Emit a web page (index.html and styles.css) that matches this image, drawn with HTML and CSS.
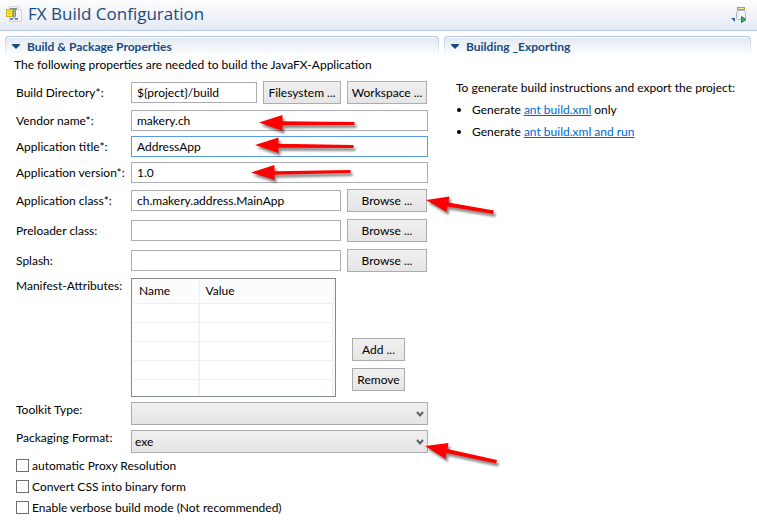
FILE: index.html
```html
<!DOCTYPE html>
<html lang="en">
<head>
<meta charset="utf-8">
<title>FX Build Configuration</title>
<link rel="stylesheet" href="styles.css">
</head>
<body>
<header class="form-header">
  <svg class="title-icon" width="16" height="16" viewBox="0 0 16 16" aria-hidden="true">
    <path d="M3.500.5h8.500l3.500 3.500v11.500h-12z" fill="#f3f4f6" stroke="#cfd2d8"/>
    <path d="M12.500.5v3h3" fill="#fff" stroke="#cfd2d8"/>
    <rect x="4" y="2" width="7" height="2" fill="#8a8f86"/>
    <rect x="7" y="4" width="3" height="7" fill="#808a86"/>
    <rect x="8" y="4" width="1" height="7" fill="#b8c0c0"/>
    <path d="M4 12h3v2H4zM9 12h3v2H9z" fill="#5b8fd6"/>
    <rect x="7" y="11" width="2" height="2" fill="#a9bdd8"/>
    <rect x=".5" y="3.500" width="6" height="7" fill="#f6e836" stroke="#c9b41f"/>
    <path d="M2 5.500h3M2 7.500h3" stroke="#d6c634"/>
  </svg>
  <h1 class="title">FX Build Configuration</h1>
  <button class="tool" type="button" aria-label="Run build">
    <svg width="16" height="16" viewBox="0 0 16 16" aria-hidden="true">
      <path d="M6.500 3.500h7l1 2v6l-1 1h-7l-1-1v-6z" fill="#f5f8fb" stroke="#a9b8cd"/>
      <path d="M7 5v6" stroke="#d4e0ea"/>
      <rect x="6.500" y=".5" width="7" height="2" fill="#f9e7a0" stroke="#c59a2b"/>
      <path d="M0 11h4v4z" fill="#2b659f"/>
      <path d="M10.500 9.500l4.500 3-4.500 3z" fill="#40ab62" stroke="#16853d"/>
    </svg>
  </button>
</header>

<main class="columns">
  <section class="section">
    <h2 class="section-title"><svg width="8" height="5" viewBox="0 0 8 5" aria-hidden="true"><path d="M0 0h8v1L4 5 0 1z"/></svg>Build &amp; Package Properties</h2>
    <p class="intro">The following properties are needed to build the JavaFX-Application</p>
    <form class="form">
      <div class="row tall">
        <label for="dir">Build Directory*:</label>
        <div class="field"><input class="text" id="dir" type="text" value="${project}/build"><button class="button medium" type="button">Filesystem ...</button><button class="button wide" type="button">Workspace ...</button></div>
      </div>
      <div class="row">
        <label for="vendor">Vendor name*:</label>
        <input class="text" id="vendor" type="text" value="makery.ch">
      </div>
      <div class="row">
        <label for="title">Application title*:</label>
        <input class="text active" id="title" type="text" value="AddressApp">
      </div>
      <div class="row">
        <label for="version">Application version*:</label>
        <input class="text" id="version" type="text" value="1.0">
      </div>
      <div class="row tall">
        <label for="class">Application class*:</label>
        <div class="field"><input class="text" id="class" type="text" value="ch.makery.address.MainApp"><button class="button wide" type="button">Browse ...</button></div>
      </div>
      <div class="row tall">
        <label for="preloader">Preloader class:</label>
        <div class="field"><input class="text" id="preloader" type="text"><button class="button wide" type="button">Browse ...</button></div>
      </div>
      <div class="row tall">
        <label for="splash">Splash:</label>
        <div class="field"><input class="text" id="splash" type="text"><button class="button wide" type="button">Browse ...</button></div>
      </div>
      <div class="row manifest">
        <span id="manifest-label">Manifest-Attributes:</span>
        <div class="manifest-field">
          <div class="table-frame">
            <table class="table" aria-labelledby="manifest-label">
              <thead><tr><th class="name-column">Name</th><th>Value</th></tr></thead>
              <tbody>
                <tr><td></td><td></td></tr>
                <tr><td></td><td></td></tr>
                <tr><td></td><td></td></tr>
                <tr><td></td><td></td></tr>
                <tr><td></td><td></td></tr>
              </tbody>
            </table>
          </div>
          <div class="table-actions">
            <button class="button" type="button">Add ...</button>
            <button class="button" type="button">Remove</button>
          </div>
        </div>
      </div>
      <div class="row choice">
        <label for="toolkit">Toolkit Type:</label>
        <div class="select-box">
          <select id="toolkit"><option></option></select>
          <svg class="chevron" width="8" height="7" viewBox="0 0 8 7" aria-hidden="true"><path d="M1 1l3 3.500L7 1"/></svg>
        </div>
      </div>
      <div class="row choice">
        <label for="format">Packaging Format:</label>
        <div class="select-box">
          <select id="format"><option>exe</option></select>
          <svg class="chevron" width="8" height="7" viewBox="0 0 8 7" aria-hidden="true"><path d="M1 1l3 3.500L7 1"/></svg>
        </div>
      </div>
      <div class="checks">
        <label class="check"><input type="checkbox">automatic Proxy Resolution</label>
        <label class="check"><input type="checkbox">Convert CSS into binary form</label>
        <label class="check"><input type="checkbox">Enable verbose build mode (Not recommended)</label>
      </div>
    </form>
  </section>

  <section class="section">
    <h2 class="section-title"><svg width="8" height="5" viewBox="0 0 8 5" aria-hidden="true"><path d="M0 0h8v1L4 5 0 1z"/></svg>Building _Exporting</h2>
    <div class="export">
      <p>To generate build instructions and export the project:</p>
      <ul>
        <li>Generate <a href="#">ant build.xml</a> only</li>
        <li>Generate <a href="#">ant build.xml and run</a></li>
      </ul>
    </div>
  </section>
</main>

<svg class="arrows" width="510" height="480" viewBox="0 0 510 480" aria-hidden="true">
  <path d="M259 122.500L282.500 115v6.200L354.500 122v3L282.500 125.200V131z"/>
  <path d="M255 145L278.500 137.500v6.200L353.500 145v3L278.500 147.800V153z"/>
  <path d="M251 172.500L274.500 165v6.200L350.500 170v3L274.500 174.800V180z"/>
  <path d="M426 200L449.500 196.500 448.500 202.500 494 210.500 493 214 447.500 206.500 446.500 212z"/>
  <path d="M425 446L448.500 443 447.500 449 497 460 496 463.500 446.500 453 445.500 459z"/>
</svg>
</body>
</html>
```

FILE: styles.css
```css
* { box-sizing: border-box; }

body {
  position: relative;
  margin: 0;
  background: #fff;
  color: #000;
  font: 12px/16px Lato, "Open Sans", sans-serif;
}

h1, h2, p, ul { margin: 0; padding: 0; }

button, input, select { font: inherit; color: inherit; }

.form-header {
  display: flex;
  align-items: center;
  gap: 6px;
  height: 31px;
  padding: 0 10px 2px 6px;
  border-bottom: 1px solid #b5c9e2;
  background: linear-gradient(#fdfdfe, #e5eaf3);
}

.title {
  flex: 1;
  color: #1a4b7f;
  font: 400 17px/24px "Open Sans", sans-serif;
}

.tool {
  width: 16px;
  height: 16px;
  margin-top: 2px;
  padding: 0;
  border: 0;
  background: none;
}

.tool svg, .title-icon { display: block; }

.columns {
  display: grid;
  grid-template-columns: 434fr 307fr;
  gap: 5px;
  padding: 5px 6px 0 5px;
}

.section-title {
  display: flex;
  align-items: center;
  gap: 7px;
  height: 21px;
  padding-left: 6px;
  border: 1px solid;
  border-color: #b5c9e2 transparent transparent;
  border-radius: 4px 4px 0 0;
  background:
    linear-gradient(#fff, #fff) 0 0 / 100% 1px no-repeat padding-box,
    linear-gradient(#e0e8f1, #fff) padding-box,
    linear-gradient(#b5c9e2, #fff) border-box;
  color: #1a4b7f;
  font-size: 12px;
  font-weight: 700;
}

.section-title svg { fill: #1a4b7f; }

.intro { padding-left: 9px; }

.form { padding: 5px 11px 0; }

.row {
  display: grid;
  grid-template-columns: 115px 1fr;
  align-items: center;
  height: 25px;
  margin-bottom: 1px;
}

.row.tall { height: 29px; }

.row.manifest {
  align-items: start;
  height: 119px;
  margin: 3px 0 5px;
}

.row.choice {
  align-items: start;
  height: 23px;
  margin-bottom: 5px;
}

.field { display: flex; align-items: center; gap: 6px; padding-right: 1px; }

.text {
  flex: 1;
  min-width: 0;
  width: 100%;
  height: 21px;
  padding: 0 5px;
  border: 1px solid #abadb3;
  background: #fff;
}

.text.active { border-color: #569de5; }

.button {
  height: 23px;
  padding: 0;
  border: 1px solid #acacac;
  background: linear-gradient(#f0f0f0, #e5e5e5);
  white-space: nowrap;
}

.medium { width: 78px; }
.wide { width: 80px; }

.manifest-field { display: flex; gap: 16px; height: 119px; }

.table-frame {
  flex: 1;
  padding: 1px;
  border: 1px solid #828790;
  overflow: hidden;
}

.table {
  width: 100%;
  table-layout: fixed;
  border-collapse: collapse;
}

.table th {
  height: 23px;
  padding: 0 6px;
  border-right: 1px solid #e8f0fb;
  border-bottom: 1px solid #e8f0fb;
  background: #fcfcfc;
  font-weight: 400;
  text-align: left;
}

.table td {
  height: 19px;
  padding: 0;
  border-right: 2px solid #edf2fb;
  border-bottom: 1px solid #f0f0f0;
}

.table tbody tr:last-child td { border-bottom: 0; }

.table .name-column { width: 66px; }

.table-actions {
  display: flex;
  flex-direction: column;
  justify-content: flex-end;
  gap: 7px;
  width: 53px;
  margin-right: 23px;
  padding-bottom: 6px;
}

.select-box { position: relative; }

.select-box select {
  display: block;
  appearance: none;
  width: 100%;
  height: 23px;
  padding: 0 18px 0 3px;
  border: 1px solid #acacac;
  border-radius: 0;
  background: linear-gradient(#f0f0f0, #e5e5e5);
}

.chevron {
  position: absolute;
  top: 9px;
  right: 4px;
  fill: none;
  stroke: #606060;
  stroke-width: 2;
  pointer-events: none;
}

.row.choice + .checks { margin-top: -3px; }

.check {
  display: flex;
  align-items: center;
  gap: 3px;
  height: 21px;
}

.check input {
  appearance: none;
  width: 13px;
  height: 13px;
  margin: 0;
  border: 1px solid #707070;
  background: #fff;
}

.export { padding: 23px 0 0 12px; }

.export ul { padding-left: 16px; }

.export p, .export li { margin-bottom: 6px; }

.export a { color: #0066cc; }

.arrows {
  position: absolute;
  top: 0;
  left: 0;
  fill: #f00;
  filter: drop-shadow(2px 3px 1px rgba(0, 0, 0, .45));
  pointer-events: none;
}
```
